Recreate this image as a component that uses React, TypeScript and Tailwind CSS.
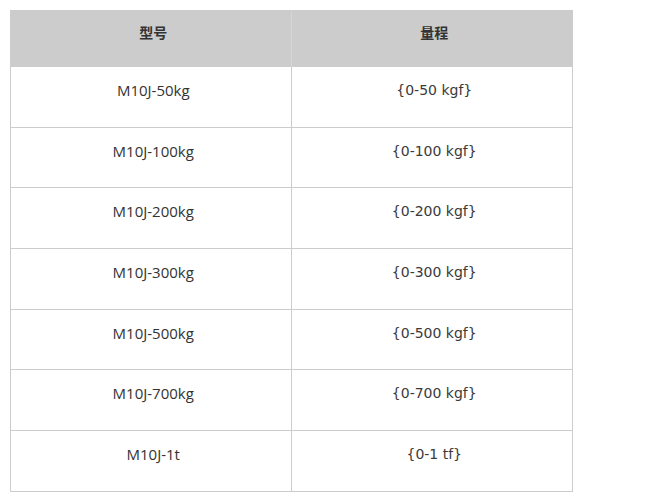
const rows = [
  { model: "M10J-50kg", range: "{0-50 kgf}" },
  { model: "M10J-100kg", range: "{0-100 kgf}" },
  { model: "M10J-200kg", range: "{0-200 kgf}" },
  { model: "M10J-300kg", range: "{0-300 kgf}" },
  { model: "M10J-500kg", range: "{0-500 kgf}" },
  { model: "M10J-700kg", range: "{0-700 kgf}" },
  { model: "M10J-1t", range: "{0-1 tf}" },
];

export default function App() {
  return (
    <div
      className="w-[667px] h-[500px] bg-white pt-[10px] pl-[10px]"
      style={{ fontFamily: '"Open Sans", "Noto Sans CJK SC", sans-serif' }}
    >
      <div className="w-[563px] border-t border-l border-r border-[#cccccc] leading-[20px] text-[#333333]">
        {/* Header */}
        <div className="grid grid-cols-2 h-[56px] bg-[#cccccc] font-bold text-[14px]">
          <div className="border-r border-[#d6d6d6] text-center pt-[12px] pl-[5px]">型号</div>
          <div className="text-center pt-[12px] pl-[5px]">量程</div>
        </div>

        {rows.map((r) => (
          <div key={r.model} className="grid grid-cols-2 h-[60.7px] border-b border-[#cccccc]">
            <div className="border-r border-[#cccccc] text-center pt-[13px] pl-[5px] text-[15px]">{r.model}</div>
            <div className="text-center pt-[13px] pl-[5px] text-[14px] font-['DejaVu_Sans',sans-serif] text-[#3a3a3a]">
              {r.range}
            </div>
          </div>
        ))}
      </div>
    </div>
  );
}
